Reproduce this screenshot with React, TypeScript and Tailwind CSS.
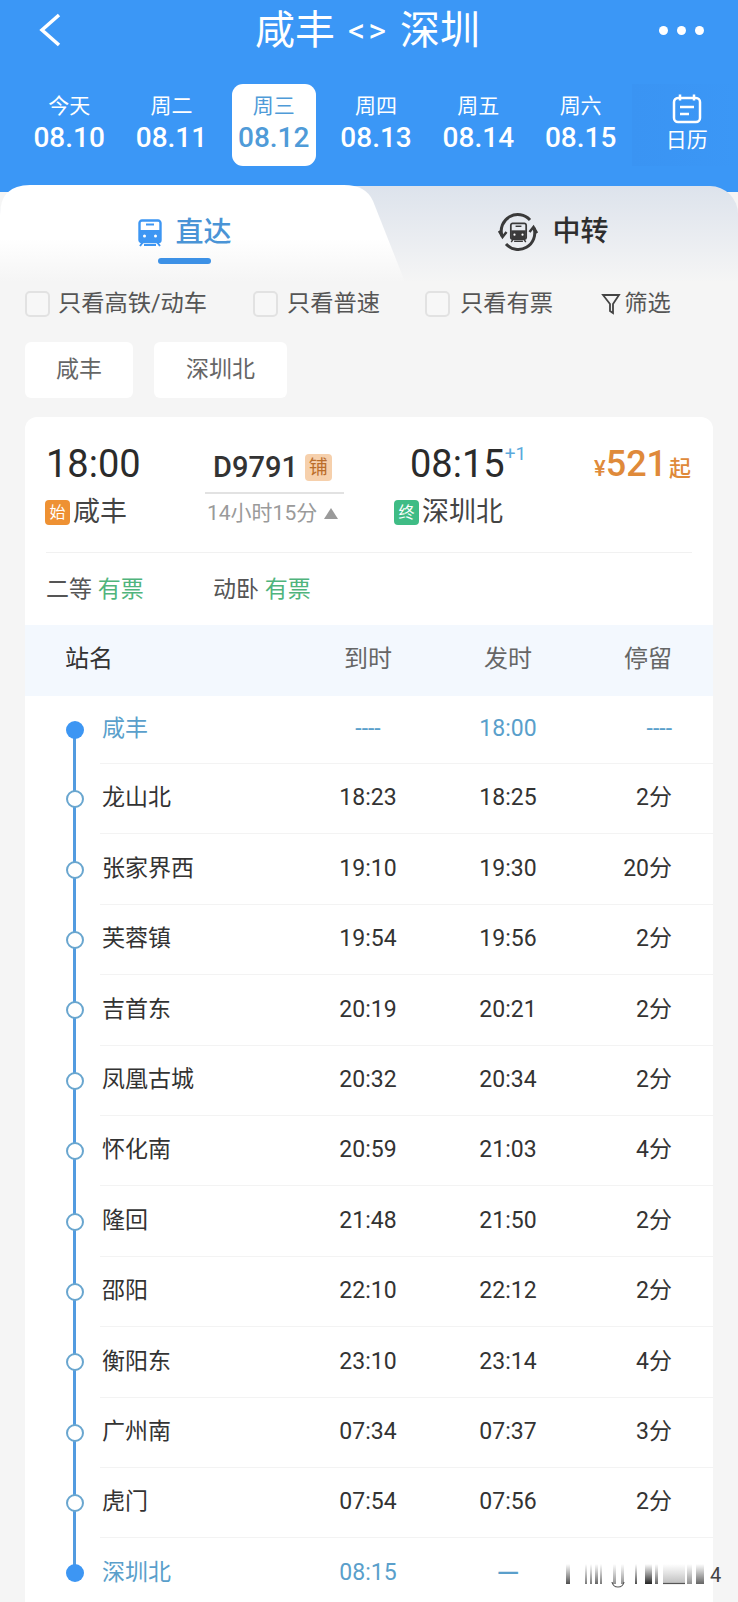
import { Fragment } from "react"

const days = [
  { label: "今天", date: "08.10" },
  { label: "周二", date: "08.11" },
  { label: "周三", date: "08.12", active: true },
  { label: "周四", date: "08.13" },
  { label: "周五", date: "08.14" },
  { label: "周六", date: "08.15" },
]

const stops = [
  { name: "咸丰", arrive: "----", leave: "18:00", stay: "----", end: true },
  { name: "龙山北", arrive: "18:23", leave: "18:25", stay: "2分" },
  { name: "张家界西", arrive: "19:10", leave: "19:30", stay: "20分" },
  { name: "芙蓉镇", arrive: "19:54", leave: "19:56", stay: "2分" },
  { name: "吉首东", arrive: "20:19", leave: "20:21", stay: "2分" },
  { name: "凤凰古城", arrive: "20:32", leave: "20:34", stay: "2分" },
  { name: "怀化南", arrive: "20:59", leave: "21:03", stay: "4分" },
  { name: "隆回", arrive: "21:48", leave: "21:50", stay: "2分" },
  { name: "邵阳", arrive: "22:10", leave: "22:12", stay: "2分" },
  { name: "衡阳东", arrive: "23:10", leave: "23:14", stay: "4分" },
  { name: "广州南", arrive: "07:34", leave: "07:37", stay: "3分" },
  { name: "虎门", arrive: "07:54", leave: "07:56", stay: "2分" },
  { name: "深圳北", arrive: "08:15", leave: "—", stay: "", end: true },
]

// 底部水印的模糊竖条
const smudges = [
  [3, 4, 0.8], [22, 2, 0.6], [27, 2, 0.6], [32, 3, 0.7], [37, 2, 0.6],
  [50, 3, 0.5], [58, 3, 0.5], [72, 2, 0.8], [82, 7, 1], [92, 3, 0.7],
  [100, 22, 0.3], [124, 5, 0.5], [133, 8, 0.7],
]

function TrainIcon({ className, color }: { className: string; color: string }) {
  return (
    <svg className={className} viewBox="0 0 26 28" fill="none">
      <path d="M5 1.500h16a2.500 2.500 0 0 1 2.500 2.500v17a2 2 0 0 1-2 2h-17a2 2 0 0 1-2-2V4A2.500 2.500 0 0 1 5 1.500z" stroke={color} strokeWidth="2.400" />
      <path d="M3 11h20v12H3z" fill={color} />
      <path d="M9 5.500h8" stroke={color} strokeWidth="2" />
      <path d="M6 23l-3 4M20 23l3 4M7 26h12" stroke={color} strokeWidth="2" />
      <circle cx="7.500" cy="17" r="1.500" fill="#fff" />
      <circle cx="18.500" cy="17" r="1.500" fill="#fff" />
    </svg>
  )
}

function TransferRing() {
  return (
    <svg className="absolute inset-0 w-[40px] h-[40px]" viewBox="0 0 40 40" fill="none" stroke="#3a3a3a" strokeWidth="3">
      <path d="M4 24A16.500 16.500 0 0 1 32 8" />
      <path d="M36 16A16.500 16.500 0 0 1 8 32" />
      <path d="M1 19l3.500 6 4-5M39 21l-3.500-6-4 5" strokeWidth="2.500" />
    </svg>
  )
}

function Checkbox({ className }: { className: string }) {
  return <span className={`w-[25px] h-[26px] rounded-[5px] border-2 border-[#e2e2e2] bg-[#f7f7f7] shrink-0 ${className}`} />
}

function StopRow({ stop, index }: { stop: (typeof stops)[number]; index: number }) {
  const first = index === 0
  const last = index === stops.length - 1
  const tone = stop.end ? "text-[#5a9fcb]" : "text-[#333]"
  return (
    <div className={`flex ${first ? "h-[68px]" : "h-[70.4px]"}`}>
      <div className="relative w-[75px] shrink-0 flex items-center pl-[41px]">
        <span
          className={`absolute left-[48px] w-[3px] bg-[#529be0] ${first ? "top-1/2 bottom-0" : last ? "top-0 bottom-1/2" : "top-0 bottom-0"}`}
        />
        <span
          className={`relative w-[18px] h-[18px] rounded-full ${stop.end ? "bg-[#3d96f3]" : "bg-white border-2 border-[#69a6cf]"}`}
        />
      </div>
      <div className={`flex-1 flex items-center text-[23px] ${tone} ${last ? "" : "border-b border-[#f3f3f3]"}`}>
        <span className="w-[230px] pl-[2px]">{stop.name}</span>
        <span className="w-[76px] text-center">{stop.arrive}</span>
        <span className={`w-[76px] ml-[64px] text-center ${stop.leave === "—" ? "text-[30px] leading-none" : ""}`}>{stop.leave}</span>
        <span className="w-[126px] text-right">{stop.stay}</span>
      </div>
    </div>
  )
}

export default function App() {
  return (
    <div className="relative w-[738px] h-[1602px] overflow-hidden bg-[#f5f5f5] font-['Roboto','Noto_Sans_CJK_SC',sans-serif] text-[#333]">
      {/* 顶部蓝色区 */}
      <div className="h-[192px] bg-[#3b97f6] text-white">
        <div className="flex items-center justify-between h-[60px] pl-[38px] pr-[34px]">
          <svg className="w-[24px] h-[34px]" viewBox="0 0 24 34" fill="none" stroke="#fff" strokeWidth="3.500">
            <path d="M21 2L4 17l17 15" />
          </svg>
          <div className="flex items-center gap-[13px] text-[40px] leading-none pt-[2px] pl-[14px]">
            <span>咸丰</span>
            <span className="text-[34px] -mt-[3px] tracking-[3px]">&lt;&gt;</span>
            <span className="-ml-[2px]">深圳</span>
          </div>
          <div className="flex gap-[9px]">
            <span className="w-[9px] h-[9px] rounded-full bg-white" />
            <span className="w-[9px] h-[9px] rounded-full bg-white" />
            <span className="w-[9px] h-[9px] rounded-full bg-white" />
          </div>
        </div>
        <div className="flex mt-[24px] pl-[18px]">
          {days.map((d) => (
            <div key={d.date} className="w-[102.300px] flex justify-center">
              <div
                className={`w-[84px] h-[82px] rounded-[11px] flex flex-col items-center justify-center pb-[4px] ${d.active ? "bg-white text-[#4f9bd8]" : ""}`}
              >
                <span className="text-[21px] leading-[30px]">{d.label}</span>
                <span className="text-[28px] leading-[34px] font-medium">{d.date}</span>
              </div>
            </div>
          ))}
          <div className="w-[106px] h-[82px] pl-[4px] flex flex-col items-center pt-[10px] bg-gradient-to-r from-[#3a94f3] to-[#3b97f6]">
            <svg className="w-[30px] h-[30px]" viewBox="0 0 30 30" fill="none" stroke="#fff" strokeWidth="2.500">
              <rect x="2" y="4" width="26" height="24" rx="4" />
              <path d="M8 0.500v6M22 0.500v6M8 13h14M8 20h9" />
            </svg>
            <span className="text-[21px] leading-[30px] mt-[1px]">日历</span>
          </div>
        </div>
      </div>

      {/* 直达 / 中转 */}
      <div className="relative -mt-[6px] h-[96px] rounded-t-[28px] bg-gradient-to-b from-[#dde3ec] to-[#f5f5f5]">
        <svg className="absolute left-0 top-[-1px] w-[420px] h-[97px]" viewBox="0 0 420 97">
          <defs>
            <linearGradient id="tabFill" x1="0" y1="0" x2="0" y2="1">
              <stop offset="0.55" stopColor="#ffffff" />
              <stop offset="1" stopColor="#f5f5f5" />
            </linearGradient>
          </defs>
          <path d="M0 30Q0 0 30 0H344Q366 0 373 16L405 97H0z" fill="url(#tabFill)" />
        </svg>
        <div className="relative flex h-full">
          <div className="w-[369px] flex flex-col items-center pt-[31px]">
            <div className="flex items-center gap-[12px] text-[#4a94d6] text-[28px] leading-[32px] font-medium">
              <TrainIcon className="w-[26px] h-[28px]" color="#3d96f3" />
              直达
            </div>
            <span className="w-[53px] h-[6px] rounded-full bg-[#3d91e6] mt-[9px]" />
          </div>
          <div className="flex-1 flex items-start justify-center pt-[28px] gap-[14px] text-[#2e2e2e] text-[28px] font-medium leading-[36px]">
            <span className="relative w-[40px] h-[40px] -mt-[2px] flex items-center justify-center">
              <TransferRing />
              <TrainIcon className="w-[19px] h-[21px]" color="#3a3a3a" />
            </span>
            中转
          </div>
        </div>
      </div>

      {/* 筛选 */}
      <div className="flex items-center h-[26px] mt-[9px] ml-[25px] text-[23.250px] text-[#555] leading-none">
        <Checkbox className="" />
        <span className="ml-[8px]">只看高铁/动车</span>
        <Checkbox className="ml-[46px]" />
        <span className="ml-[9px]">只看普速</span>
        <Checkbox className="ml-[45px]" />
        <span className="ml-[10px]">只看有票</span>
        <svg className="ml-[48px] w-[20px] h-[24px]" viewBox="0 0 20 24" fill="none" stroke="#444" strokeWidth="1.800">
          <path d="M2 3h16l-6 9v9l-3-2v-7z" />
        </svg>
        <span className="ml-[3px]">筛选</span>
      </div>

      <div className="flex gap-[21px] mt-[25px] ml-[25px] text-[23px] text-[#666]">
        <div className="w-[108px] h-[56px] rounded-[6px] bg-white flex items-center justify-center">咸丰</div>
        <div className="w-[133px] h-[56px] rounded-[6px] bg-white flex items-center justify-center">深圳北</div>
      </div>

      {/* 车次卡片 */}
      <div className="mt-[19px] mx-[25px] rounded-t-[12px] bg-white h-[1200px]">
        <div className="mx-[21px] h-[136px] border-b border-[#f1f1f1] flex">
          <div className="w-[159px] pt-[24px]">
            <div className="text-[38px] leading-[46px] text-[#2b2b2b]">18:00</div>
            <div className="flex items-center gap-[3px] mt-[7px] -ml-[1px] text-[27px] leading-[36px] text-[#444]">
              <span className="w-[25px] h-[25px] rounded-[4px] bg-[#ee9133] text-white text-[16px] leading-[25px] text-center">始</span>
              咸丰
            </div>
          </div>
          <div className="w-[152px] pt-[32px]">
            <div className="flex items-center pl-[8px] gap-[7px]">
              <span className="text-[29px] leading-[36px] font-medium text-[#333]">D9791</span>
              <span className="w-[27px] h-[27px] rounded-[4px] bg-[#f6d0ac] text-[#bb6d2a] text-[19px] leading-[27px] text-center">铺</span>
            </div>
            <div className="mt-[7px] mr-[13px] border-t-2 border-[#e2e2e2] pt-[3px] flex items-center pl-[2px] gap-[7px] text-[21px] leading-[32px] text-[#9a9a9a] whitespace-nowrap">
              14小时15分
              <span className="w-0 h-0 border-x-[7px] border-x-transparent border-b-[11px] border-b-[#9a9a9a]" />
            </div>
          </div>
          <div className="w-[199px] pt-[24px] pl-[37px]">
            <div className="flex items-start">
              <span className="text-[38px] leading-[46px] text-[#2b2b2b] ml-[16px]">08:15</span>
              <span className="text-[19px] leading-[24px] text-[#5ba9dc] mt-[1px]">+1</span>
            </div>
            <div className="flex items-center gap-[3px] mt-[7px] text-[27px] leading-[36px] text-[#444] whitespace-nowrap">
              <span className="w-[25px] h-[25px] rounded-[4px] bg-[#3fbc85] text-white text-[16px] leading-[25px] text-center">终</span>
              深圳北
            </div>
          </div>
          <div className="flex-1 pt-[25px] ml-[38px] text-[#df8a3a] font-medium whitespace-nowrap">
            <span className="text-[22px]">¥</span>
            <span className="text-[36px] leading-[44px]">521</span>
            <span className="text-[22px] ml-[2px]">起</span>
          </div>
        </div>

        <div className="flex items-center h-[72px] pt-[3px] ml-[21px] text-[23px] text-[#555]">
          <span className="w-[167px]">二等 <span className="text-[#4fb47c]">有票</span></span>
          <span>动卧 <span className="text-[#4fb47c]">有票</span></span>
        </div>

        <div className="flex items-center h-[71px] pb-[3px] bg-[#f3f8fe] text-[24px] text-[#666]">
          <span className="w-[305px] pl-[40px] text-[#333]">站名</span>
          <span className="w-[76px] text-center">到时</span>
          <span className="w-[76px] ml-[64px] text-center">发时</span>
          <span className="w-[126px] text-right">停留</span>
        </div>

        {stops.map((s, i) => (
          <Fragment key={s.name}>
            <StopRow stop={s} index={i} />
          </Fragment>
        ))}
      </div>

      {/* 水印 */}
      <div className="absolute left-[563px] top-[1560px] flex items-end">
        <svg className="w-[147px] h-[30px]" viewBox="0 0 147 30">
          <defs>
            <linearGradient id="smudge" x1="0" y1="0" x2="0" y2="1">
              <stop offset="0" stopColor="#333" stopOpacity="0" />
              <stop offset="1" stopColor="#222" stopOpacity="1" />
            </linearGradient>
          </defs>
          {smudges.map(([x, w, o]) => (
            <rect key={x} x={x} y="4" width={w} height="20" fill="url(#smudge)" opacity={o} />
          ))}
          <path d="M49 22q1 5 6 5t6-5" fill="none" stroke="#555" strokeWidth="1.200" />
          <path d="M100 23.500h22" stroke="#555" strokeWidth="1.200" />
        </svg>
        <span className="text-[20px] leading-[24px] text-[#444] mb-[3px]">4</span>
      </div>
    </div>
  )
}
